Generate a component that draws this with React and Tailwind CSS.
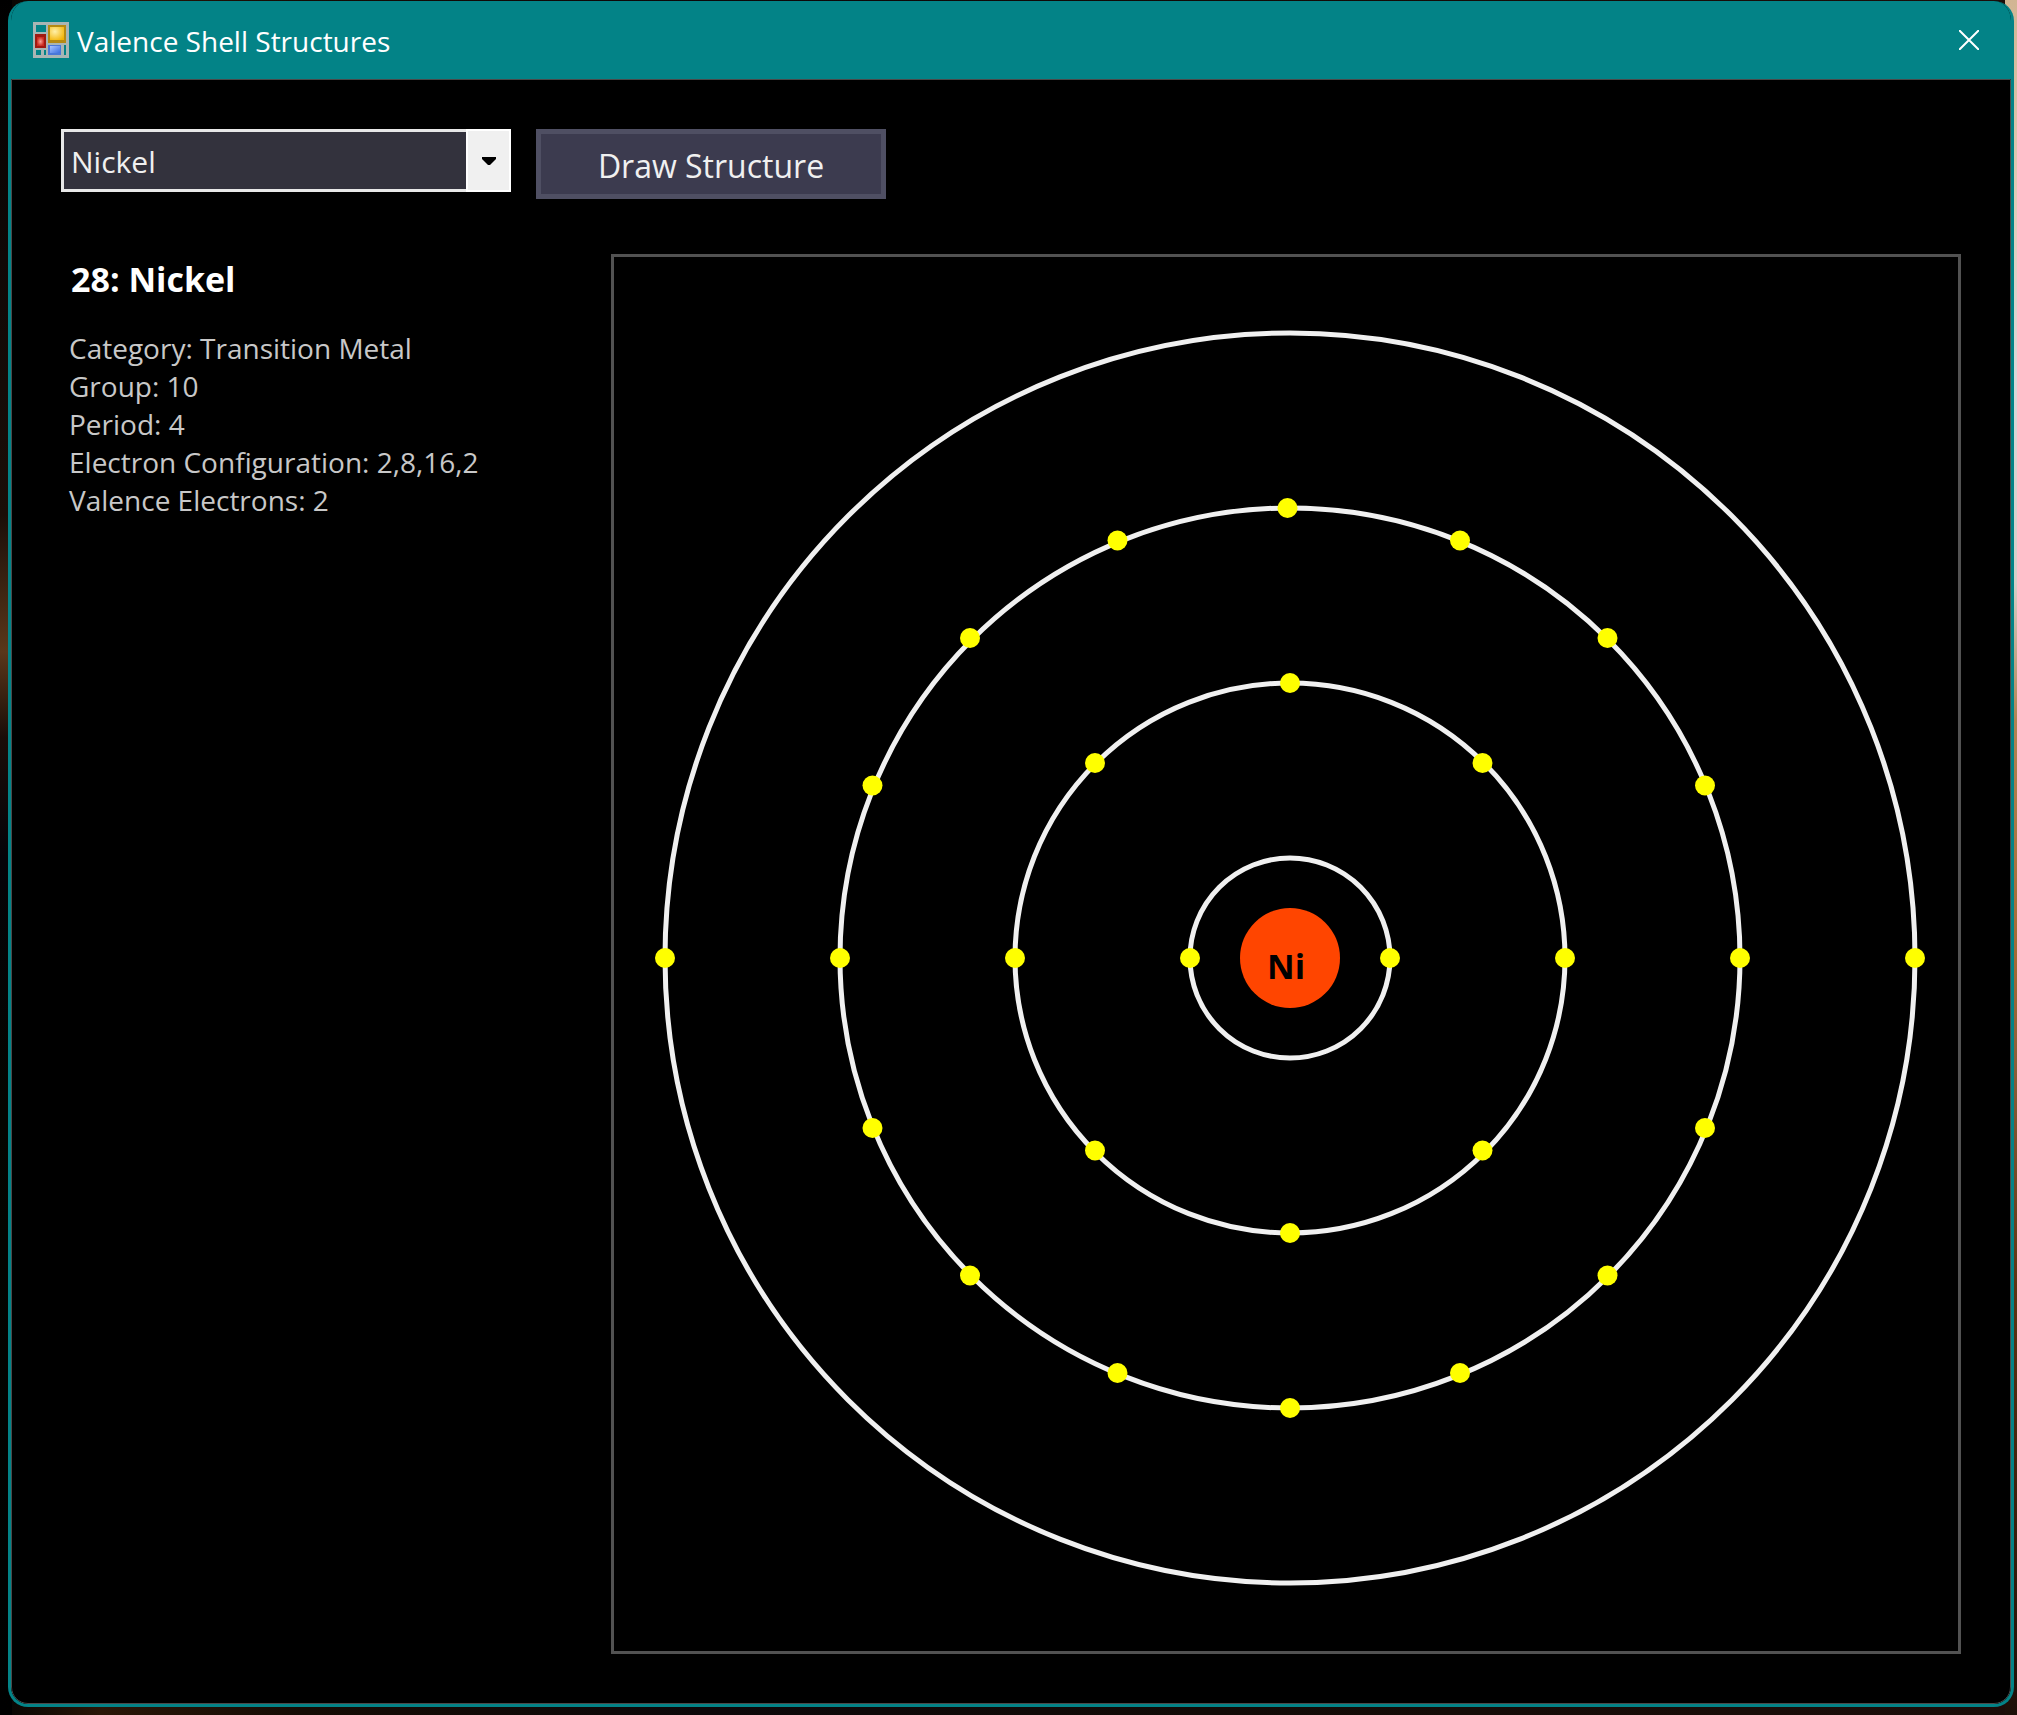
import React, { useState } from "react";

const ELEMENTS = {
  Nickel: {
    number: 28,
    symbol: "Ni",
    category: "Transition Metal",
    group: 10,
    period: 4,
    shells: [2, 8, 16, 2],
  },
};

// Centre of the atom in the drawing's own units.
const CENTER_X = 676;
const CENTER_Y = 701;

// Electrons snap down to a coarse pixel grid, GRID_SCALE drawing units wide.
const GRID_SCALE = 2.5;
const GRID_ORIGIN = 270;
const snap = (value) =>
  (Math.floor(GRID_ORIGIN + value) - GRID_ORIGIN) * GRID_SCALE;

const shellRadius = (index) => 40 + index * 70;

function AppIcon() {
  return (
    <svg viewBox="0 0 36 36" className="size-9 shrink-0" aria-hidden="true">
      <defs>
        <radialGradient id="gold" cx="0.35" cy="0.35" r="0.8">
          <stop offset="0" stopColor="#fff0a8" />
          <stop offset="1" stopColor="#f2b200" />
        </radialGradient>
        <radialGradient id="red">
          <stop offset="0" stopColor="#f7a296" />
          <stop offset="1" stopColor="#cc2b20" />
        </radialGradient>
        <linearGradient id="blue" x1="0" y1="0" x2="1" y2="1">
          <stop offset="0" stopColor="#a8c4ff" />
          <stop offset="1" stopColor="#3a6ee0" />
        </linearGradient>
      </defs>
      <rect width="36" height="36" fill="#a9b5b4" />
      <rect x="3" y="3" width="10" height="7" fill="#038387" />
      <rect x="3" y="28" width="5" height="5" fill="#038387" />
      <rect x="11" y="28" width="2" height="5" fill="#038387" />
      <rect x="31" y="23" width="2" height="10" fill="#038387" />
      <rect x="15" y="3" width="18" height="18" fill="#b58a12" />
      <rect x="17" y="5" width="14" height="13" fill="url(#gold)" />
      <rect x="2" y="12" width="11" height="14" fill="#a01a12" />
      <rect x="4" y="15" width="7" height="9" fill="url(#red)" />
      <rect x="15" y="23" width="13" height="10" fill="#4a78d8" />
      <rect x="17" y="24" width="10" height="7" fill="url(#blue)" />
    </svg>
  );
}

function AtomDiagram({ element }) {
  return (
    <svg
      viewBox="0 0 1344 1394"
      className="block w-full"
      role="img"
      aria-label="Electron shell diagram"
    >
      {element.shells.map((_, i) => (
        <circle
          key={i}
          cx={CENTER_X}
          cy={CENTER_Y}
          r={shellRadius(i) * GRID_SCALE}
          fill="none"
          stroke="#f0f0f0"
          strokeWidth="5"
        />
      ))}
      <circle cx={CENTER_X} cy={CENTER_Y} r="50" fill="#ff4500" />
      {element.shells.map((count, i) =>
        Array.from({ length: count }, (_, n) => {
          const angle = (n * 2 * Math.PI) / count;
          const r = shellRadius(i);
          return (
            <circle
              key={`${i}-${n}`}
              cx={CENTER_X + snap(r * Math.cos(angle))}
              cy={CENTER_Y + snap(r * Math.sin(angle))}
              r="10"
              fill="#ffff00"
            />
          );
        })
      )}
      <text
        x={CENTER_X - 4}
        y={CENTER_Y + 21}
        textAnchor="middle"
        className="fill-black font-['Open_Sans',sans-serif] text-[34px] font-bold"
      >
        {element.symbol}
      </text>
    </svg>
  );
}

export default function App() {
  const [name, setName] = useState("Nickel");
  const element = ELEMENTS[name];

  return (
    <div className="grid min-h-screen bg-[linear-gradient(180deg,#d2b593_0%,#e0cdb8_12%,#d9d9d9_22%,#d5cfc8_34%,#b08352_42%,#a26a35_56%,#8a5f3a_62%,#5c3413_75%,#3b1f0c_88%,#1c0f08_100%),linear-gradient(180deg,#000000_0%,#100806_15%,#1a0e08_30%,#5a371a_38%,#1a0d08_43%,#050308_50%,#040500_65%,#000000_100%),linear-gradient(90deg,#050402_0%,#2a1607_5%,#150b04_15%,#0c0709_35%,#120a06_60%,#1c0d09_100%)] bg-[position:right_top,left_top,left_top] bg-[size:12px_100%,12px_100%,100%_100%] bg-no-repeat pt-px pr-[3px] pb-2 pl-2 font-['Open_Sans','Noto_Sans',sans-serif]">
      <div className="flex flex-col overflow-hidden rounded-[20px] border-[3px] border-t-0 border-[#038387] bg-black">
        <header className="flex h-[78px] shrink-0 items-center bg-[#038387] pr-8 pl-[22px]">
          <AppIcon />
          <h1 className="ml-2 flex-1 pt-0.5 text-[28px] leading-9 text-white">Valence Shell Structures</h1>
          <button type="button" aria-label="Close" className="flex size-5 items-center justify-center">
            <svg viewBox="0 0 20 20" className="size-5" fill="none" stroke="white" strokeWidth="2">
              <path d="M0 0L20 20M20 0L0 20" />
            </svg>
          </button>
        </header>

        <main className="flex flex-1 flex-col rounded-b-[17px] border border-[#4a4a4a] px-[49px] pt-[49px] pb-12">
          <div className="flex items-start gap-[25px]">
            <div className="relative">
              <select
                aria-label="Element"
                value={name}
                onChange={(e) => setName(e.target.value)}
                className="block h-[63px] w-[450px] appearance-none rounded-none border-[3px] border-[#e8e8e8] bg-[#33323d] pt-0.5 pl-[7px] text-[30px] text-[#f0f0f0] outline-none"
              >
                <option>Nickel</option>
              </select>
              <span className="pointer-events-none absolute inset-y-0 right-0 flex w-[45px] items-center justify-center border-2 border-white bg-[#f0f0f0]">
                <svg viewBox="0 0 14 8" className="h-2 w-3.5">
                  <path d="M0 0H14V2L8 8H6L0 2Z" />
                </svg>
              </span>
            </div>
            <button
              type="button"
              className="h-[70px] w-[350px] border-[5px] border-[#4f4f63] bg-[#3c3b4f] pt-1 text-[32px] leading-10 text-[#f0f0f0]"
            >
              Draw Structure
            </button>
          </div>

          <div className="mt-[55px] flex items-start">
            <section className="w-[550px] shrink-0 pl-2">
              <h2 className="mt-[5px] pl-0.5 text-[34px] leading-10 font-bold text-white">
                {element.number}: {name}
              </h2>
              <div className="mt-[30px] text-[28px] leading-[38px] text-[#c8c8c8]">
                <p>Category: {element.category}</p>
                <p>Group: {element.group}</p>
                <p>Period: {element.period}</p>
                <p>Electron Configuration: {element.shells.join(",")}</p>
                <p>Valence Electrons: {element.shells[element.shells.length - 1]}</p>
              </div>
            </section>
            <div className="min-w-0 flex-1 border-[3px] border-[#525252]">
              <AtomDiagram element={element} />
            </div>
          </div>
        </main>
      </div>
    </div>
  );
}
